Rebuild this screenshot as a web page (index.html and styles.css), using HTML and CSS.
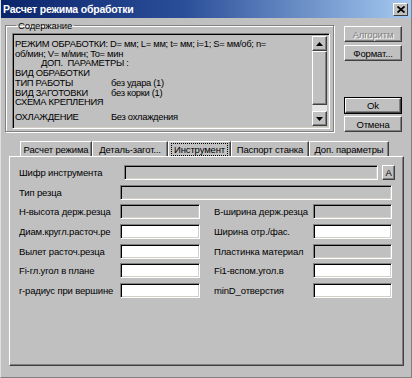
FILE: index.html
```html
<!doctype html>
<html>
  <head>
    <meta charset="utf-8">
    <link rel="stylesheet" href="styles.css">
    <title>Расчет режима обработки</title>
  </head>
  <body>
    <div id="window">
      <div id="title-bar">
        <span class="title">Расчет режима обработки</span>
        <span class="close-btn">
          <svg width="8" height="7" viewBox="0 0 8 7"><path d="M0.5 0.5 L7.5 6.5 M7.5 0.5 L0.5 6.5" stroke="#000" stroke-width="1.8"/></svg>
        </span>
      </div>
      <div id="client">
        <div class="top-row">
          <fieldset class="group">
            <legend>Содержание</legend>
            <div class="memo">
              <div class="memo-text">
                <div class="line">РЕЖИМ ОБРАБОТКИ: D= мм; L= мм; t= мм; i=1; S= мм/об; n=</div>
                <div class="line">об/мин; V= м/мин; To= мин</div>
                <div class="line indent">ДОП.&nbsp; ПАРАМЕТРЫ :</div>
                <div class="line">ВИД ОБРАБОТКИ</div>
                <div class="line"><span class="key">ТИП РАБОТЫ</span>без удара (1)</div>
                <div class="line"><span class="key">ВИД ЗАГОТОВКИ</span>без корки (1)</div>
                <div class="line">СХЕМА КРЕПЛЕНИЯ</div>
                <div class="line last"><span class="key">ОХЛАЖДЕНИЕ</span>Без охлаждения</div>
              </div>
              <div class="scrollbar">
                <div class="sb-btn">
                  <svg width="7" height="4" viewBox="0 0 7 4"><path d="M3.5 0 L7 4 L0 4 Z" fill="#000"/></svg>
                </div>
                <div class="sb-thumb"></div>
                <div class="sb-track"></div>
                <div class="sb-btn">
                  <svg width="7" height="4" viewBox="0 0 7 4"><path d="M0 0 L7 0 L3.5 4 Z" fill="#000"/></svg>
                </div>
              </div>
            </div>
          </fieldset>
          <div class="side-buttons">
            <button class="btn disabled">Алгоритм</button>
            <button class="btn">Формат...</button>
            <div class="spacer"></div>
            <button class="btn default">Ok</button>
            <button class="btn">Отмена</button>
          </div>
        </div>

        <div class="tabs">
          <div class="tab t1">Расчет режима</div>
          <div class="tab t2">Деталь-загот...</div>
          <div class="tab t3 active"><span class="focus">Инструмент</span></div>
          <div class="tab t4">Паспорт станка</div>
          <div class="tab t5">Доп. параметры</div>
        </div>

        <div class="panel">
          <div class="row first">
            <span class="label">Шифр инструмента</span>
            <span class="field gray"></span>
            <button class="btn small">A</button>
          </div>
          <div class="row wide">
            <span class="label">Тип резца</span>
            <span class="field gray"></span>
          </div>
          <div class="row">
            <span class="label">Н-высота держ.резца</span>
            <span class="field gray"></span>
            <span class="label right">В-ширина держ.резца</span>
            <span class="field gray"></span>
          </div>
          <div class="row">
            <span class="label">Диам.кругл.расточ.ре</span>
            <span class="field"></span>
            <span class="label right">Ширина отр./фас.</span>
            <span class="field"></span>
          </div>
          <div class="row">
            <span class="label">Вылет расточ.резца</span>
            <span class="field"></span>
            <span class="label right">Пластинка материал</span>
            <span class="field gray"></span>
          </div>
          <div class="row">
            <span class="label">Fi-гл.угол в плане</span>
            <span class="field"></span>
            <span class="label right">Fi1-вспом.угол.в</span>
            <span class="field"></span>
          </div>
          <div class="row">
            <span class="label">r-радиус при вершине</span>
            <span class="field"></span>
            <span class="label right">minD_отверстия</span>
            <span class="field"></span>
          </div>
        </div>
      </div>
    </div>
  </body>
</html>
```

FILE: styles.css
```css
body {
  margin: 0;
  background: #c0c0c0;
  font-family: "Liberation Sans", Arial, sans-serif;
  font-size: 9.5px;
  letter-spacing: -0.15px;
  color: #000;
}

#window {
  width: 412px;
  height: 378px;
  box-sizing: border-box;
  background: #c0c0c0;
  border-left: 1px solid #e0e0e0;
  border-right: 1px solid #808080;
  border-bottom: 1px solid #808080;
  display: flex;
  flex-direction: column;
}

/* title */

#title-bar {
  height: 18px;
  display: flex;
  align-items: center;
  justify-content: space-between;
  padding: 0 3px 0 2px;
  background: linear-gradient(to right, #0a246a 0%, #2c4f9a 45%, #a6caf0 100%);
}

.title {
  color: #fff;
  font-weight: bold;
  font-size: 10.5px;
  letter-spacing: -0.2px;
}

.close-btn {
  width: 13px;
  height: 11px;
  display: flex;
  align-items: center;
  justify-content: center;
  background: #c0c0c0;
  border: 1px solid;
  border-color: #fff #404040 #404040 #fff;
}

#client {
  flex: 1;
  display: flex;
  flex-direction: column;
  padding: 2px 8px 0 4px;
}

/* content group */

.top-row {
  display: flex;
  height: 112px;
}

.group {
  margin: 0;
  width: 329px;
  box-sizing: border-box;
  border: 1px solid #808080;
  box-shadow: 1px 1px 0 #fff, inset 1px 1px 0 #fff;
  padding: 2px 3px 4px 6px;
}

.group legend {
  padding: 0 2px;
  margin-left: 4px;
}

.memo {
  height: 90px;
  display: flex;
  border: 1px solid;
  border-color: #808080 #fff #fff #808080;
  box-shadow: inset 1px 1px 0 #000, inset -1px -1px 0 #d4d0c8;
  padding: 2px;
}

.memo-text {
  flex: 1;
  padding: 3px 0 0 0;
  font-size: 9.4px;
  letter-spacing: -0.3px;
  line-height: 9.7px;
  overflow: hidden;
}

.line {
  white-space: nowrap;
}

.indent {
  padding-left: 26px;
}

.last {
  margin-top: 5px;
}

.key {
  display: inline-block;
  width: 96px;
}

.scrollbar {
  width: 15px;
  display: flex;
  flex-direction: column;
}

.sb-btn {
  height: 13px;
  display: flex;
  align-items: center;
  justify-content: center;
  border: 1px solid;
  border-color: #fff #404040 #404040 #fff;
  box-shadow: inset -1px -1px 0 #808080;
}

.sb-thumb {
  flex: 1;
  border: 1px solid;
  border-color: #fff #404040 #404040 #fff;
  box-shadow: inset -1px -1px 0 #808080;
}

.sb-track {
  height: 6px;
  background: #e4e4e4;
}

/* buttons on the right */

.side-buttons {
  width: 58px;
  margin-left: 10px;
  padding-top: 6px;
  display: flex;
  flex-direction: column;
  gap: 3px;
}

.spacer {
  flex: 1;
}

.btn {
  height: 16px;
  padding: 0;
  font-family: inherit;
  font-size: 9.5px;
  letter-spacing: -0.15px;
  color: #000;
  background: #c0c0c0;
  border: 1px solid;
  border-color: #fff #404040 #404040 #fff;
  box-shadow: inset -1px -1px 0 #808080;
}

.btn.disabled {
  color: #808080;
  text-shadow: 1px 1px 0 #fff;
}

.btn.default {
  outline: 1px solid #000;
  height: 15px;
  margin: 1px 1px 0 1px;
}

/* tabs */

.tabs {
  display: flex;
  margin: 8px 0 0 15px;
  height: 16px;
}

.tab {
  height: 15px;
  box-sizing: border-box;
  white-space: nowrap;
  display: flex;
  align-items: center;
  justify-content: center;
  border-top: 1px solid #fff;
  border-left: 1px solid #fff;
  border-right: 1px solid #404040;
  box-shadow: inset -1px 0 0 #808080;
  margin-top: 1px;
}

.t1 { width: 72px; }
.t2 { width: 76px; }
.t3 { width: 63px; }
.t4 { width: 78px; }
.t5 { width: 80px; }

.tab.active .focus {
  outline: 1px dotted #000;
  padding: 0 2px;
}

.panel {
  width: 395px;
  height: 210px;
  box-sizing: border-box;
  margin-left: 4px;
  border: 1px solid;
  border-color: #fff #404040 #404040 #fff;
  box-shadow: inset -1px -1px 0 #808080;
  padding: 8px 0 0 9px;
  display: flex;
  flex-direction: column;
  gap: 4.7px;
}

.row {
  height: 15px;
  display: grid;
  grid-template-columns: 101px 80px 113px 79px;
  align-items: center;
}

.row.first {
  grid-template-columns: 101px 254px 13px;
  column-gap: 4px;
}

.row.wide {
  grid-template-columns: 101px 272px;
}

.label {
  white-space: nowrap;
  overflow: hidden;
}

.label.right {
  margin-left: 14px;
}

.field {
  height: 15px;
  box-sizing: border-box;
  background: #fff;
  border: 1px solid;
  border-color: #808080 #fff #fff #808080;
  box-shadow: inset 1px 1px 0 #000, inset -1px -1px 0 #d4d0c8;
}

.field.gray {
  background: #c0c0c0;
}

.btn.small {
  width: 13px;
  height: 15px;
}
```
